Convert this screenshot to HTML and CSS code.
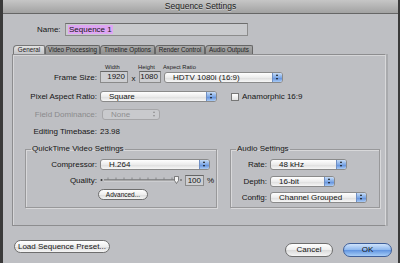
FILE: index.html
```html
<!DOCTYPE html>
<html lang="en">
<head>
    <meta charset="UTF-8">
    <meta name="viewport" content="width=device-width, initial-scale=1.0">
    <title>Sequence Settings</title>
    <link rel="stylesheet" href="styles.css">
</head>
<body>

<div class="window">
    <div class="titlebar">Sequence Settings</div>

    <div class="content">
        <div class="name-row">
            <span class="name-label">Name:</span>
            <div class="name-input"><span class="selected">Sequence 1</span></div>
        </div>

        <div class="tabs">
            <div class="tab active">General</div>
            <div class="tab">Video Processing</div>
            <div class="tab">Timeline Options</div>
            <div class="tab">Render Control</div>
            <div class="tab">Audio Outputs</div>
        </div>

        <div class="pane">
            <div class="heads">
                <span class="head-width">Width</span>
                <span class="head-height">Height</span>
                <span class="head-aspect">Aspect Ratio</span>
            </div>

            <div class="row">
                <span class="lbl">Frame Size:</span>
                <div class="numbox box-width">1920</div>
                <span class="times">x</span>
                <div class="numbox box-height">1080</div>
                <div class="popup pop-aspect"><span class="val">HDTV 1080i (16:9)</span><span class="cap"></span></div>
            </div>

            <div class="row row-par">
                <span class="lbl">Pixel Aspect Ratio:</span>
                <div class="popup pop-par"><span class="val">Square</span><span class="cap"></span></div>
                <span class="checkbox"></span>
                <span class="check-label">Anamorphic 16:9</span>
            </div>

            <div class="row row-field">
                <span class="lbl disabled">Field Dominance:</span>
                <div class="popup pop-field off"><span class="val">None</span><span class="cap"></span></div>
            </div>

            <div class="row row-timebase">
                <span class="lbl">Editing Timebase:</span>
                <span class="value">23.98</span>
            </div>

            <div class="groups">
                <fieldset class="group group-video">
                    <legend>QuickTime Video Settings</legend>
                    <div class="row row-comp">
                        <span class="lbl">Compressor:</span>
                        <div class="popup pop-comp"><span class="val">H.264</span><span class="cap"></span></div>
                    </div>
                    <div class="row row-quality">
                        <span class="lbl">Quality:</span>
                        <svg class="slider" width="82" height="10" viewBox="0 0 82 10">
                            <circle cx="1.5" cy="5" r="1" fill="#333"/>
                            <line x1="4" y1="5" x2="76" y2="5" stroke="#555" stroke-width="1"/>
                            <line x1="4" y1="6" x2="76" y2="6" stroke="#eee" stroke-width="0.6"/>
                            <g stroke="#666" stroke-width="0.6">
                                <line x1="8" y1="2.5" x2="8" y2="4.5"/>
                                <line x1="16" y1="2.5" x2="16" y2="4.5"/>
                                <line x1="24" y1="2.5" x2="24" y2="4.5"/>
                                <line x1="32" y1="2.5" x2="32" y2="4.5"/>
                                <line x1="40" y1="2.5" x2="40" y2="4.5"/>
                                <line x1="48" y1="2.5" x2="48" y2="4.5"/>
                                <line x1="56" y1="2.5" x2="56" y2="4.5"/>
                                <line x1="64" y1="2.5" x2="64" y2="4.5"/>
                                <line x1="72" y1="2.5" x2="72" y2="4.5"/>
                            </g>
                            <path d="M74.5 1.5 h4 v4 l-2 3 l-2 -3 z" fill="#f2f2f2" stroke="#555" stroke-width="0.7"/>
                            <line x1="80" y1="5" x2="82" y2="5" stroke="#555" stroke-width="1"/>
                        </svg>
                        <div class="numbox box-quality">100</div>
                        <span class="percent">%</span>
                    </div>
                    <div class="row row-adv">
                        <div class="button btn-adv">Advanced...</div>
                    </div>
                </fieldset>

                <fieldset class="group group-audio">
                    <legend>Audio Settings</legend>
                    <div class="row row-rate">
                        <span class="lbl">Rate:</span>
                        <div class="popup pop-rate"><span class="val">48 kHz</span><span class="cap"></span></div>
                    </div>
                    <div class="row row-depth">
                        <span class="lbl">Depth:</span>
                        <div class="popup pop-depth"><span class="val">16-bit</span><span class="cap"></span></div>
                    </div>
                    <div class="row row-config">
                        <span class="lbl">Config:</span>
                        <div class="popup pop-config"><span class="val">Channel Grouped</span><span class="cap"></span></div>
                    </div>
                </fieldset>
            </div>
        </div>

        <div class="footer">
            <div class="button btn-load">Load Sequence Preset...</div>
            <div class="footer-right">
                <div class="button btn-cancel">Cancel</div>
                <div class="button btn-ok">OK</div>
            </div>
        </div>
    </div>
</div>

</body>
</html>
```

FILE: styles.css
```css
body {
    margin: 0;
    padding: 0;
    background: #bebfc3;
    font-family: 'Liberation Sans', Arial, sans-serif;
    font-size: 8px;
    color: #151515;
}
.window {
    width: 400px;
    height: 263px;
    box-sizing: border-box;
    border-left: 3px solid #3a3a3a;
    border-right: 2px solid #3a3a3a;
    background: #bebfc3;
    overflow: hidden;
}
.titlebar {
    height: 13px;
    line-height: 13px;
    text-align: center;
    font-size: 8.5px;
    color: #1c1c1c;
    text-shadow: 0 1px 0 #d0d0d0;
    background: linear-gradient(#c6c6c6, #a2a2a2);
    border-bottom: 1px solid #666;
}
.content {
    padding: 0 0 0 9px;
}

/* name field */
.name-row {
    display: flex;
    align-items: center;
    margin-top: 9px;
    height: 13px;
}
.name-label {
    margin-left: 25px;
    width: 25px;
}
.name-input {
    margin-left: 3px;
    width: 179px;
    height: 11px;
    line-height: 11px;
    background: #c9cacd;
    border: 1px solid #8c8c8c;
    border-top-color: #6d6d6d;
    padding-left: 2px;
}
.selected {
    background: #dea6f3;
    padding: 0 1px;
}

/* tabs */
.tabs {
    display: flex;
    margin-top: 9px;
    margin-left: 1px;
    height: 9px;
}
.tab {
    box-sizing: border-box;
    height: 9px;
    line-height: 8px;
    padding: 0;
    text-align: center;
    white-space: nowrap;
    font-size: 6.3px;
    color: #222;
    background: linear-gradient(#a9a9a9, #8f8f8f);
    border: 1px solid #666;
    border-bottom: none;
    border-radius: 4px 2px 0 0;
}
.tab:nth-child(2) { width: 55px; }
.tab:nth-child(3) { width: 55px; }
.tab:nth-child(4) { width: 50px; }
.tab:nth-child(5) { width: 48px; }
.tab.active {
    width: 32px;
    background: linear-gradient(#e2e2e2, #c4c5c8);
    border-color: #777;
}

/* main pane */
.pane {
    width: 357px;
    height: 170px;
    border: 1px solid #8d8d8f;
    border-right-color: #d8d8da;
    box-shadow: inset 1px 1px 0 #d6d6d8, 2px 0 0 #a9aaad;
    padding: 0 3px 0 12px;
}
.heads {
    display: flex;
    margin-top: 9px;
    height: 7px;
    font-size: 5.8px;
    line-height: 7px;
    color: #222;
}
.head-width {
    margin-left: 80px;
    width: 16px;
}
.head-height {
    margin-left: 17px;
    width: 20px;
}
.head-aspect {
    margin-left: 5px;
}
.row {
    display: flex;
    align-items: center;
    height: 12px;
}
.lbl {
    width: 72px;
    margin-right: 3px;
    text-align: right;
    white-space: nowrap;
}
.lbl.disabled {
    color: #8a8a8c;
}
.row-par { margin-top: 7px; }
.row-field { margin-top: 6px; }
.row-timebase { margin-top: 5px; }

.numbox {
    height: 10px;
    line-height: 10px;
    background: #cdced1;
    border: 1px solid #8a8a8a;
    border-top-color: #666;
    text-align: right;
    padding-right: 2px;
}
.box-width { width: 24px; }
.box-height { width: 18px; }
.times {
    width: 11px;
    text-align: center;
    margin-top: 3px;
}

/* aqua popup menus */
.popup {
    display: flex;
    height: 11px;
    box-sizing: border-box;
    border: 1px solid #8a8a8a;
    border-radius: 3px;
    background: linear-gradient(#ffffff, #ececec 50%, #dcdcdc 51%, #f7f7f7);
    overflow: hidden;
    line-height: 9px;
}
.popup .val {
    flex: 1;
    padding-left: 8px;
    white-space: nowrap;
}
.popup .cap {
    width: 9px;
    border-left: 1px solid #6f8fc4;
    background: linear-gradient(#c6dcf7, #7fa9e6 50%, #5b8ad9 51%, #a9cbf5);
    position: relative;
}
.popup .cap::before,
.popup .cap::after {
    content: "";
    position: absolute;
    left: 3px;
    border-left: 1.5px solid transparent;
    border-right: 1.5px solid transparent;
}
.popup .cap::before {
    top: 1.5px;
    border-bottom: 2px solid #111;
}
.popup .cap::after {
    bottom: 1.5px;
    border-top: 2px solid #111;
}
.popup.off {
    border-color: #a6a6a8;
    background: #c9cacd;
    color: #8e8e90;
}
.popup.off .cap {
    border-left: none;
    background: none;
}
.popup.off .cap::before { border-bottom-color: #8e8e90; }
.popup.off .cap::after { border-top-color: #8e8e90; }

.pop-aspect { width: 119px; margin-left: 3px; }
.pop-par { width: 117px; }
.pop-field { width: 58px; margin-left: 2px; }
.pop-comp { width: 110px; }
.pop-rate { width: 77px; }
.pop-depth { width: 65px; }
.pop-config { width: 97px; }

.checkbox {
    width: 6px;
    height: 6px;
    margin-left: 14px;
    margin-top: 2px;
    border: 1px solid #777;
    background: linear-gradient(#ffffff, #e2e2e2);
}
.check-label {
    margin-left: 3px;
}

/* group boxes */
.groups {
    display: flex;
    gap: 13px;
    margin-top: 7px;
}
.group {
    margin: 0;
    padding: 0;
    min-width: 0;
    border: 1px solid #98989a;
    box-shadow: inset 1px 1px 0 #d8d8da, 1px 1px 0 #d8d8da;
    box-sizing: border-box;
}
.group legend {
    padding: 0 1px;
    margin-left: 5px;
    line-height: 10px;
}
.group-video {
    width: 192px;
    height: 64px;
}
.group-audio {
    width: 150px;
    height: 64px;
}
.group-video .lbl { width: 71px; }
.group-audio .lbl { width: 36px; }
.row-comp { margin-top: 4px; }
.row-quality { margin-top: 4px; }
.slider { display: block; }
.box-quality {
    width: 15px;
    margin-left: 3px;
    height: 9px;
    line-height: 9px;
}
.percent { margin-left: 3px; }
.row-adv { margin-top: 2px; height: 13px; }
.row-rate { margin-top: 4px; }
.row-depth { margin-top: 5px; }
.row-config { margin-top: 4px; }

/* buttons */
.button {
    box-sizing: border-box;
    text-align: center;
    border: 1px solid #6e6e6e;
    border-radius: 7px;
    background: linear-gradient(#ffffff, #eeeeee 50%, #dadada 51%, #f5f5f5);
    white-space: nowrap;
}
.btn-adv {
    margin-left: 72px;
    width: 50px;
    height: 11px;
    line-height: 9px;
    font-size: 6.5px;
}
.footer {
    display: flex;
    justify-content: space-between;
    align-items: flex-start;
    margin-top: 14px;
    padding-right: 6px;
}
.btn-load {
    margin-left: 2px;
    width: 96px;
    height: 13px;
    line-height: 11px;
}
.footer-right {
    display: flex;
    gap: 10px;
    margin-top: 3px;
}
.btn-cancel {
    width: 48px;
    height: 14px;
    line-height: 12px;
}
.btn-ok {
    width: 49px;
    height: 14px;
    line-height: 12px;
    border-color: #3f5f9a;
    background: linear-gradient(#cfe3fb, #8db7ee 50%, #5f93e0 51%, #a7cdf7);
}
```
